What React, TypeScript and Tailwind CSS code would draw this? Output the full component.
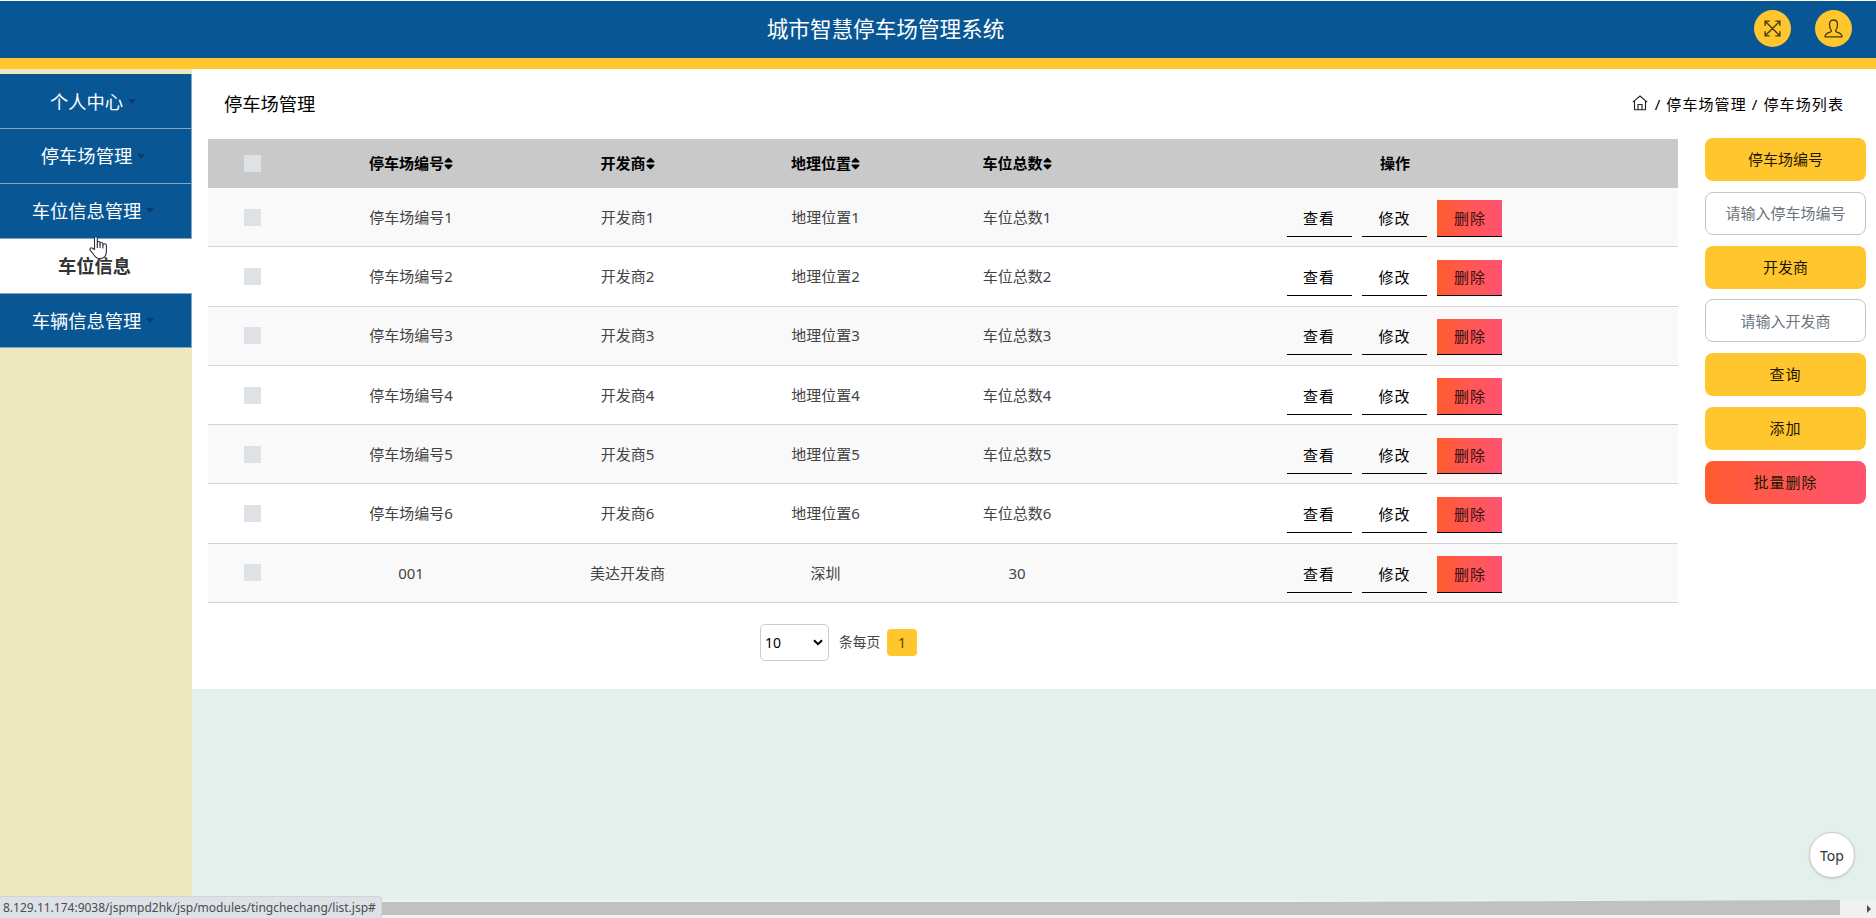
import { FaSort } from "react-icons/fa";

const menus = ["个人中心", "停车场管理", "车位信息管理"];

const columns = ["停车场编号", "开发商", "地理位置", "车位总数"];

const rows = [
  ["停车场编号1", "开发商1", "地理位置1", "车位总数1"],
  ["停车场编号2", "开发商2", "地理位置2", "车位总数2"],
  ["停车场编号3", "开发商3", "地理位置3", "车位总数3"],
  ["停车场编号4", "开发商4", "地理位置4", "车位总数4"],
  ["停车场编号5", "开发商5", "地理位置5", "车位总数5"],
  ["停车场编号6", "开发商6", "地理位置6", "车位总数6"],
  ["001", "美达开发商", "深圳", "30"],
];

const gridCols = "grid grid-cols-[88px_230px_203px_193px_190px_566px] items-center";

function MenuItem({ label }: { label: string }) {
  return (
    <a className="flex h-[54.8px] items-center justify-center gap-[5px] border-r border-b border-[#7fa6c6] bg-[#085694] pr-[5px] text-[18.3px] text-white">
      {label}
      <span className="border-x-[4.5px] border-t-[5px] border-x-transparent border-t-[#083c69]" />
    </a>
  );
}

function RowButton({ label, danger }: { label: string; danger?: boolean }) {
  return (
    <button
      className={`h-[36.5px] w-[64.8px] border-b border-black tracking-[1px] ${
        danger ? "bg-linear-to-r from-[#ff5b2b] to-[#ff5370] text-[#3a0d10]" : "text-black"
      }`}
    >
      {label}
    </button>
  );
}

function SideButton({ label, className = "bg-[#ffc62e]" }: { label: string; className?: string }) {
  return (
    <button className={`h-[43px] w-full rounded-[8px] text-[#1f1700] ${className}`}>
      {label}
    </button>
  );
}

function HandCursor() {
  return (
    <svg className="absolute top-[236px] left-[89px]" width="19" height="24" viewBox="0 0 19 24" fill="#fff" stroke="#2d2d3c" strokeWidth="1.1" strokeLinejoin="round">
      <path d="M5.5 13.5V2.2C5.5.3 8.3.3 8.3 2.2V8.5V6.7C8.3 5 11 5.2 11 6.9V8.7V7.5C11 6 13.9 6.2 13.9 7.8V9.5V8.7C13.9 7.2 17.4 7.4 17.4 9.2V14.5C17.4 19.5 15.5 22.6 11 22.6C7.5 22.6 6.3 21 5 19L1.2 14.2C.2 12.5 2 11.1 3.5 12.2Z" />
      <path d="M8.3 8V12M11 8.5V12M13.9 9.3V12.5" />
    </svg>
  );
}

export default function App() {
  return (
    <div className="relative flex h-[918px] w-[1876px] flex-col overflow-hidden bg-[#e3f0eb] font-['Noto_Sans','Noto_Sans_CJK_SC',sans-serif] text-[15px] text-black">
      <header className="flex h-[69px] shrink-0 items-center border-t border-b-[11px] border-t-white border-b-[#ffc62e] bg-[#085694]">
        <div className="w-[1771px] text-center text-[21.6px] text-white">城市智慧停车场管理系统</div>
        <div className="-ml-[17px] flex shrink-0 gap-[24px] pb-[2px]">
          <span className="flex size-[37px] items-center justify-center rounded-full bg-[#ffc62e]">
            <svg width="17" height="17" viewBox="0 0 18 18" fill="none" stroke="#4a3a0a" strokeWidth="1.5">
              <path d="M1.5 1.5L16.5 16.5M16.5 1.5L1.5 16.5M1.2 6V1.2H6M12 1.2H16.8V6M16.8 12V16.8H12M6 16.8H1.2V12" />
            </svg>
          </span>
          <span className="flex size-[37px] items-center justify-center rounded-full bg-[#ffc62e]">
            <svg width="19" height="19" viewBox="0 0 19 19" fill="none" stroke="#4a3a0a" strokeWidth="1.3" strokeLinejoin="round">
              <path d="M7.4 11.6C6 10 5.5 8 5.5 5.4C5.5 2.6 7 1 9.5 1S13.5 2.6 13.5 5.4C13.5 8 13 10 11.6 11.6C11.4 12.9 12.2 13 13.6 13.4C16.4 14.2 18 15 18 17.8H1C1 15 2.6 14.2 5.4 13.4C6.8 13 7.6 12.9 7.4 11.6Z" />
            </svg>
          </span>
        </div>
      </header>

      <div className="flex min-h-0 flex-1">
        <aside className="w-[192px] shrink-0 bg-[#ece9c0] pt-[5.4px]">
          {menus.map((m) => (
            <MenuItem key={m} label={m} />
          ))}
          <a className="flex h-[54.8px] items-center justify-center border-b border-[#7fa6c6] bg-white pr-[3px] text-[18.3px] font-semibold text-[#333]">
            车位信息
          </a>
          <MenuItem label="车辆信息管理" />
        </aside>

        <main className="flex-1">
          <div className="h-[620px] bg-white">
            <div className="flex h-[70px] items-center justify-between px-[32px]">
              <h1 className="text-[18.3px]">停车场管理</h1>
              <div className="flex items-center tracking-[1.1px]">
                <svg className="mr-[7px] mb-[3px]" width="16" height="16" viewBox="0 0 16 16" fill="none" stroke="#222" strokeWidth="1.1">
                  <path d="M.8 7.2L8 1L15.2 7.2M2.5 6V14.8H13.5V6M6 14.5V9.5H10V14.5" />
                </svg>
                <span>/ 停车场管理 / 停车场列表</span>
              </div>
            </div>

            <div className="flex pl-[16px]">
              <div className="w-[1470px]">
                <div className={`${gridCols} h-[49px] bg-[#c9c9c9] text-center font-bold`}>
                  <span className="mx-auto size-[17px] bg-[#dee2e6]" />
                  {columns.map((c) => (
                    <span key={c} className="flex items-center justify-center">
                      {c}
                      <FaSort className="h-[15px] w-[9px]" preserveAspectRatio="none" />
                    </span>
                  ))}
                  <span>操作</span>
                </div>
                {rows.map((row) => (
                  <div
                    key={row[0]}
                    className={`${gridCols} h-[59.3px] border-b border-[#d3d3d3] text-center text-[#444] odd:bg-white even:bg-[#f9f9f9]`}
                  >
                    <span className="mx-auto size-[17px] bg-[#dee2e6]" />
                    {row.map((cell) => (
                      <span key={cell}>{cell}</span>
                    ))}
                    <span className="flex justify-center gap-[10.6px] pt-[3px] pr-px">
                      <RowButton label="查看" />
                      <RowButton label="修改" />
                      <RowButton label="删除" danger />
                    </span>
                  </div>
                ))}
                <div className="flex items-center pt-[21px] pl-[552px] text-[#444]">
                  <div className="flex h-[37px] w-[69px] items-center justify-between rounded-[5px] border border-[#ccc] bg-white px-[5px] text-[14px] text-black">
                    <span className="-ml-px">10</span>
                    <svg width="10" height="7" viewBox="0 0 10 7" fill="none" stroke="#000" strokeWidth="2">
                      <path d="M1 1.2L5 5.2L9 1.2" />
                    </svg>
                  </div>
                  <span className="ml-[10px] text-[13.7px]">条每页</span>
                  <span className="mb-px ml-[7px] flex h-[27px] w-[30px] items-center justify-center rounded-[4px] bg-[#ffc62e] text-[14px] text-[#5a3c00]">
                    1
                  </span>
                </div>
              </div>

              <div className="-mt-px ml-[27px] flex w-[161px] flex-col gap-[10.8px]">
                <SideButton label="停车场编号" />
                <input className="h-[43px] rounded-[8px] border border-[#c4c4c4] text-center placeholder:text-[#6c757d]" placeholder="请输入停车场编号" />
                <SideButton label="开发商" />
                <input className="h-[43px] rounded-[8px] border border-[#c4c4c4] text-center placeholder:text-[#6c757d]" placeholder="请输入开发商" />
                <SideButton label="查询" className="bg-[#ffc62e] tracking-[1px]" />
                <SideButton label="添加" className="bg-[#ffc62e] tracking-[1px]" />
                <SideButton label="批量删除" className="bg-linear-to-r from-[#ff5b2b] to-[#ff5370] tracking-[1px]" />
              </div>
            </div>
          </div>
        </main>
      </div>

      {/* browser scrollbar and link status */}
      <div className="absolute bottom-0 left-0 flex h-[18px] w-full bg-[#f1f1f1]">
        <div className="h-[15px] w-[1840px] bg-[#c1c1c1] [clip-path:polygon(0_2px,70%_2px,100%_0,100%_100%,0_100%)]" />
        <div className="mt-[5px] ml-[27px] h-0 border-y-[4px] border-l-[4px] border-y-transparent border-l-[#505050]" />
      </div>
      <div className="absolute bottom-0 left-0 flex h-[22px] w-[382px] items-center rounded-tr-[4px] border-t border-r border-[#d0d4da] bg-[#dee1e6] pl-[3px] text-[12px] whitespace-nowrap text-[#4a4d51]">
        8.129.11.174:9038/jspmpd2hk/jsp/modules/tingchechang/list.jsp#
      </div>

      <button className="absolute top-[832px] left-[1809px] size-[46px] rounded-full border border-[#ccc] bg-white text-[14px] text-[#333] shadow-sm">
        Top
      </button>
      <HandCursor />
    </div>
  );
}
